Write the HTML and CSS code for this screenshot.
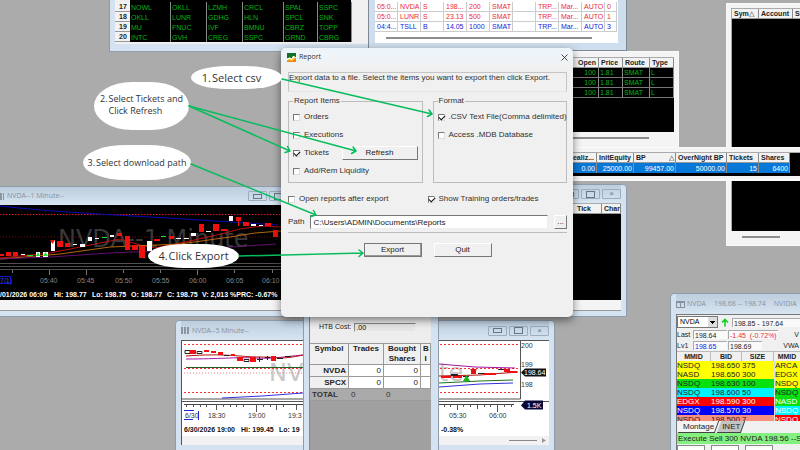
FILE: index.html
```html
<!DOCTYPE html>
<html lang="en">
<head>
<meta charset="utf-8">
<title>Report export</title>
<link rel="stylesheet" href="styles.css">
</head>
<body>
<main class="desktop">

  <section class="window win-symbols">
    <table class="grid symbols">
      <colgroup><col class="c-num"><col class="c-41"><col class="c-36"><col class="c-36"><col class="c-41"><col class="c-34"><col class="c-34"></colgroup>
      <tbody>
        <tr><th>17</th><td>NOWL</td><td>OKLL</td><td>LZMH</td><td>CRCL</td><td>SPAL</td><td>SSPC</td></tr>
        <tr><th>18</th><td>OKLL</td><td>LUNR</td><td>GDHG</td><td>HLN</td><td>SPCL</td><td>SNK</td></tr>
        <tr><th>19</th><td>MU</td><td>FNUC</td><td>IVF</td><td>BMNU</td><td>CBRZ</td><td>TOPP</td></tr>
        <tr><th>20</th><td>INTC</td><td>GVH</td><td>CREG</td><td>SSPC</td><td>GRND</td><td>CBRG</td></tr>
      </tbody>
    </table>
  </section>

  <section class="window win-trades">
    <table class="grid trades">
      <colgroup><col class="c-23"><col class="c-23"><col class="c-23"><col class="c-23"><col class="c-23"><col class="c-23"><col class="c-23"><col class="c-23"><col class="c-23"><col class="c-23"><col class="c-12"></colgroup>
      <tbody>
        <tr class="sell"><td>05:0...</td><td>NVDA</td><td>S</td><td>198...</td><td>200</td><td>SMAT</td><td></td><td>TRP...</td><td>Mar...</td><td>AUTO</td><td>0</td></tr>
        <tr class="sell"><td>05:0...</td><td>LUNR</td><td>S</td><td>23.13</td><td>500</td><td>SMAT</td><td></td><td>TRP...</td><td>Mar...</td><td>AUTO</td><td>1</td></tr>
        <tr class="buy"><td>04:4...</td><td>TSLL</td><td>B</td><td>14.05</td><td>1000</td><td>SMAT</td><td></td><td>TRP...</td><td>Mar...</td><td>AUTO</td><td>3</td></tr>
      </tbody>
    </table>
    <div class="scroll-line"></div>
  </section>

  <section class="window plain win-orders">
    <div class="black-pane">
      <table class="grid orders">
        <colgroup><col><col class="c-24"><col class="c-27"><col class="c-24"></colgroup>
        <thead><tr><th class="num">Open</th><th>Price</th><th>Route</th><th>Type</th></tr></thead>
        <tbody>
          <tr><td class="num">100</td><td>1.81</td><td>SMAT</td><td>L</td></tr>
          <tr><td class="num">100</td><td>1.81</td><td>SMAT</td><td>L</td></tr>
          <tr><td class="num">100</td><td>1.81</td><td>SMAT</td><td>L</td></tr>
        </tbody>
      </table>
    </div>
    <div class="scroll-line"></div>
  </section>

  <section class="window plain win-positions">
    <div class="black-pane">
      <table class="grid">
        <colgroup><col class="c-27"><col class="c-34"><col></colgroup>
        <thead><tr><th>Sym<i>△</i></th><th>Account</th><th>St</th></tr></thead>
      </table>
    </div>
    <div class="scroll-line"></div>
  </section>

  <section class="window plain win-account">
    <div class="black-pane">
      <table class="grid account">
        <colgroup><col><col class="c-37"><col class="c-42"><col class="c-51"><col class="c-32"><col class="c-31"></colgroup>
        <thead><tr><th class="num">Realiz...</th><th>InitEquity</th><th><span class="sorted">BP <i>△</i></span></th><th>OverNight BP</th><th>Tickets</th><th>Shares</th></tr></thead>
        <tbody><tr><td>0.00</td><td>25000.00</td><td>99457.00</td><td>50000.00</td><td>15</td><td>6400</td></tr></tbody>
      </table>
    </div>
  </section>

  <section class="window win-tick">
    <div class="titlebar"><span class="controls"><span class="ctl min"></span><span class="ctl max"></span><span class="ctl close">×</span></span></div>
    <div class="black-pane">
      <table class="grid">
        <colgroup><col><col class="c-19"></colgroup>
        <thead><tr><th><span class="tick-head">Tick</span></th><th>Char</th></tr></thead>
      </table>
    </div>
    <div class="footer-strip"></div>
  </section>

  <section class="window win-chart1">
    <div class="titlebar"><span class="bars-icon"></span><span class="wtitle">NVDA--1 Minute--</span><span class="controls"><span class="ctl min"></span><span class="ctl max"></span></span></div>
    <svg class="chart1" viewBox="0 205 281 95" role="img" aria-label="NVDA one minute chart">
      <rect x="0" y="205" width="281" height="95" fill="#000"/>
      <text x="58" y="247" class="mark dark">NVDA--1 Minute</text>
      <path d="M0 214.500H281" stroke="#e01828" stroke-dasharray="1.500 1.500" fill="none"/>
      <path d="M0 237H281" stroke="#8a1018" stroke-dasharray="1 2" fill="none" stroke-width=".8"/>
      <path d="M0 206C60 213 140 216 200 220S250 223 278 225" stroke="#0808b8" fill="none"/>
      <path d="M0 258L50 253 100 243 120 239 140 245 155 248 190 241 225 233 240 229 262 226 281 227" stroke="#d01010" fill="none" stroke-width=".9"/>
      <path d="M0 259L60 254 110 247 180 244 230 237 255 233 281 231" stroke="#c87010" fill="none" stroke-width=".9"/>
      <path d="M0 259L50 257 110 253 180 250 230 247 276 244" stroke="#70107c" fill="none" stroke-width=".9"/>
      <g fill="#f01010"><path d="M0 254h4v2H0zM6 252h5v4H6zM13 252h5v4h-5zM57 241h6v6h-6zM65 243h5v4h-5zM117 233h5v3h-5zM125 236h5v14h-5zM132 245h6v5h-6zM139 246h6v12h-6zM154 239h6v2h-6zM169 236h5v3h-5zM199 224h5v8h-5zM213 224h6v7h-6zM221 229h6v2h-6zM236 217h5v4h-5zM238 221h1v5h-1zM243 222h6v4h-6zM265 223h6v3h-6zM273 230h5v7h-5z"/></g>
      <g fill="#fff"><path d="M21 254h4v1h-4zM36 252h4v5h-4zM43 252h5v5h-5zM51 240h4v11h-4zM73 244h4v1h-4zM80 244h5v3h-5zM88 237h4v4h-4zM95 238h4v1h-4zM110 235h4v2h-4zM147 241h5v10h-5zM176 238h5v1h-5zM184 238h5v1h-5zM191 233h5v3h-5zM206 231h5v1h-5zM229 216h4v5h-4zM251 224h5v2h-5zM259 225h4v1h-4z"/></g>
      <g fill="#20e030"><path d="M36 256l2-4 2 4zM43 256l2.500-4 2.500 4zM27 255h6v1h-6zM102 237h5v1h-5zM161 236h5v1h-5z"/></g>
      <path d="M50 240h5l-2.500 4z" fill="#f01010"/>
      <path d="M0 263.500H281M0 266.500H281M0 269.500H281" stroke="#505050" fill="none"/>
      <path d="M12.500 270v3M49.500 270v5M86.500 270v5M123.500 270v3M160.500 270v3M197.500 270v5M234.500 270v3M272.500 270v3" stroke="#777" fill="none"/>
      <text x="0" y="283" class="axis blue">7/1)</text><path d="M0 276.500h10.500v7H0" stroke="#1018c8" fill="none"/>
      <g class="axis dim"><text x="40" y="283">05:40</text><text x="77" y="283">05:45</text><text x="115" y="283">05:50</text><text x="152" y="283">05:55</text><text x="189" y="283">06:00</text><text x="226" y="283">06:05</text><text x="262" y="283">06:10</text></g>
      <text y="297" class="info white"><tspan x="0">/01/2026 06:09</tspan><tspan x="54">Hi: 198.77</tspan><tspan x="92">Lo: 198.75</tspan><tspan x="131">O: 198.77</tspan><tspan x="167">C: 198.75</tspan><tspan x="202">V: 2,013 %PRC: -0.67%</tspan></text>
    </svg>
    <div class="footer-strip"></div>
  </section>

  <section class="window win-chart5">
    <div class="titlebar"><span class="bars-icon"></span><span class="wtitle">NVDA--5 Minute--</span><span class="controls"><span class="ctl min"></span><span class="ctl max"></span><span class="ctl close">×</span></span></div>
    <svg class="chart5" viewBox="181 340 368 105" role="img" aria-label="NVDA five minute chart">
      <rect x="181" y="340" width="368" height="105" fill="#fff"/>
      <path d="M181 340.500H549M181.500 340V445M520.500 340V399H181M181 401.500H549" stroke="#555" fill="none"/>
      <text x="269" y="381" class="mark light">NV</text><text x="439" y="381" class="mark light">te</text>
      <path d="M184 344.500H519M184 368.500H519M184 392.500H519" stroke="#ff3030" stroke-dasharray="2 2" fill="none"/>
      <path d="M184 373H302" stroke="#f08080" stroke-dasharray="1 2" fill="none"/>
      <path d="M186 367.500H305" stroke="#206020" fill="none"/>
      <path d="M186 359C220 359 235 357 255 358S280 357 303 355M439 364L475 367 515 368" stroke="#a018a0" fill="none"/>
      <path d="M186 356C225 353 240 357 260 357S280 360 303 355M439 376L480 375 518 372" stroke="#b01010" fill="none"/>
      <path d="M439 383L480 381 513 380" stroke="#207020" fill="none"/>
      <path d="M222 398L262 396 303 393M439 387L480 384 513 383" stroke="#3030e0" fill="none"/>
      <path d="M185 350.500h5v3h-5zM197 351.500h5v2h-5zM244 359.500h5v2h-5z" stroke="#222" fill="#fff"/>
      <path d="M190 350h6v4h-6zM204 350h5v2h-5zM211 351h5v2h-5zM218 352h5v3h-5zM231 354h4v2h-4zM237 357h6v4h-6zM250 357h6v5h-6zM271 356h5v5h-5zM441 376h10v2h-10zM453 376h9v2h-9zM471 369h5v5h-5zM484 373h12v2h-12zM504 369h6v3h-6zM507 371h10v2h-10z" fill="#f01010"/>
      <path d="M224 355h5v1h-5zM257 359h6v1h-6zM259 357h1v5h-1zM265 357h5v1h-5zM267 356h1v4h-1zM277 358h6v1h-6zM285 356h6v1h-6zM451 374h7v2h-7zM463 376h6v1h-6zM478 373h6v1h-6zM498 369h6v1h-6z" fill="#222"/>
      <path d="M463 381l3.500-6 3.500 6z" fill="#18b818"/><path d="M470 369h7l-3.500 5z" fill="#e01010"/>
      <g class="axis"><text x="521" y="348">200</text><text x="521" y="367">199</text><text x="521" y="387">198</text></g>
      <path d="M521 372.500l4-4h21v8h-21z" fill="#111"/><text x="524" y="375" class="axis white">198.64</text>
      <path d="M521 405.500l4-5h18v9h-18z" fill="#080838"/><text x="527" y="408" class="axis white">1.5K</text>
      <path d="M184 404.500H514" stroke="#444" fill="none"/>
      <path d="M186.500 404v3M193.500 404v3M200.500 404v3M206.500 404v3M216.500 404v6M223.500 404v3M230.500 404v3M236.500 404v3M243.500 404v3M256.500 404v8M263.500 404v3M270.500 404v3M276.500 404v6M283.500 404v3M296.500 404v6M444.500 404v3M450.500 404v3M457.500 404v6M463.500 404v3M470.500 404v3M477.500 404v5M484.500 404v3M490.500 404v3M497.500 404v8M504.500 404v3M511.500 404v3" stroke="#555" fill="none"/>
      <text x="185" y="418" class="axis">6/30</text><path d="M184 410.500h10M184 419.500h9M198.500 411v9" stroke="#2020e0" fill="none"/>
      <g class="axis"><text x="208" y="418">18:30</text><text x="248" y="418">19:00</text><text x="288" y="418">19:3</text><text x="449" y="418">05:30</text><text x="489" y="418">06:00</text></g>
      <text y="432" class="info"><tspan x="184">6/30/2026 19:00</tspan><tspan x="241">Hi: 199.45</tspan><tspan x="279">Lo: 19</tspan><tspan x="441">-0.38%</tspan></text>
      <rect x="182" y="436" width="367" height="9" fill="#f2f2f2"/>
      <path d="M509 440.500h28" stroke="#888" fill="none"/><path d="M542 438l4 2.500-4 2.500z" fill="#999"/>
    </svg>
  </section>

  <section class="window win-htb">
    <div class="htb-body">
      <div class="htb-row"><label for="htb">HTB Cost:</label><input id="htb" type="text" value=".00"></div>
      <table class="shares">
        <colgroup><col class="c-39"><col class="c-35"><col class="c-37"><col></colgroup>
        <thead><tr><th>Symbol</th><th>Trades</th><th>Bought<br>Shares</th><th>B<br>I</th></tr></thead>
        <tbody>
          <tr><th>NVDA</th><td>0</td><td>0</td><td></td></tr>
          <tr><th>SPCX</th><td>0</td><td>0</td><td></td></tr>
          <tr class="total"><th>TOTAL</th><td>0</td><td>0</td><td></td></tr>
        </tbody>
      </table>
    </div>
  </section>

  <section class="window win-montage">
    <div class="titlebar"><span class="grid-icon"></span><span class="wtitle spread"><span>NVDA</span><span>198.68 -- 198.74</span><span>NVIDIA</span></span></div>
    <div class="montage">
      <div class="quote-row"><select aria-label="Symbol"><option>NVDA</option></select><svg class="up" viewBox="0 0 8 8"><path d="M4 8V1M1 4l3-3 3 3" stroke="#10d020" stroke-width="1.600" fill="none"/></svg><span class="field grow">198.85 - 197.64</span></div>
      <div class="quote-row small"><span class="tag">Last</span><span class="field w34">198.64</span><span class="field w50 red">-1.45&nbsp; (-0.72%)</span><span class="end">V</span></div>
      <div class="quote-row small"><span class="tag">Lv1</span><span class="field w34 blue">198.65</span><span class="field w34">198.69</span><span class="end">VWA</span></div>
      <div class="book-clip">
        <table class="book">
          <colgroup><col class="c-34"><col class="c-31"><col class="c-32"><col></colgroup>
          <thead><tr><th>MMID</th><th>BID</th><th>SIZE</th><th>MMID</th></tr></thead>
          <tbody>
            <tr class="yellow"><td>NSDQ</td><td>198.650</td><td>375</td><td>ARCA</td></tr>
            <tr class="yellow"><td>NASD</td><td>198.650</td><td>300</td><td>EDGX</td></tr>
            <tr class="green"><td>NSDQ</td><td>198.630</td><td>100</td><td class="yellow">NSDQ</td></tr>
            <tr class="cyan"><td>NSDQ</td><td>198.600</td><td>50</td><td class="green">NSDQ</td></tr>
            <tr class="crimson"><td>EDGX</td><td>198.590</td><td>300</td><td class="green">NASD</td></tr>
            <tr class="navy"><td>NSDQ</td><td>198.570</td><td>30</td><td class="cyan">NSDQ</td></tr>
            <tr class="salmon"><td>NSDQ</td><td>198.500</td><td>7</td><td class="crimson">NSDQ</td></tr>
          </tbody>
        </table>
      </div>
      <div class="tabs"><span class="tab active">Montage</span><span class="tab">INET</span></div>
      <div class="exec">Execute Sell 300 NVDA 198.56 --S</div>
      <div class="order-row"><i></i><i></i><i></i></div>
    </div>
  </section>

  <form class="dialog" aria-label="Report">
    <header class="dialog-title">
      <svg class="app-icon" viewBox="0 0 10 10"><rect width="10" height="10" rx="1" fill="#f8c820"/><path d="M0 0h10v5L7 3 5 6 3 5 0 6z" fill="#107028"/><path d="M0 6l3-1 2 1 2-3 3 2v1L7 5 5 8 3 6 0 8z" fill="#fff"/><path d="M0 9l3-1 3 1 4-4v5H0z" fill="#f08018"/></svg>
      <span>Report</span>
      <button type="button" class="x-button" aria-label="Close"><svg viewBox="0 0 7 7"><path d="M.5.5l6 6M6.500.5l-6 6" stroke="#333" stroke-width=".9"/></svg></button>
    </header>
    <div class="dialog-body">
      <p class="intro">Export data to a file. Select the items you want to export then click Export.</p>
      <div class="groups">
        <fieldset>
          <legend>Report Items</legend>
          <label class="check"><input type="checkbox">Orders</label>
          <label class="check"><input type="checkbox">Executions</label>
          <div class="with-button"><label class="check"><input type="checkbox" checked>Tickets</label><button type="button" class="btn refresh">Refresh</button></div>
          <label class="check"><input type="checkbox">Add/Rem Liquidity</label>
        </fieldset>
        <fieldset>
          <legend>Format</legend>
          <label class="check"><input type="checkbox" checked>.CSV Text File(Comma delimited)</label>
          <label class="check"><input type="checkbox">Access .MDB Database</label>
        </fieldset>
      </div>
      <div class="options">
        <label class="check"><input type="checkbox">Open reports after export</label>
        <label class="check"><input type="checkbox" checked>Show Training orders/trades</label>
      </div>
      <div class="path-row">
        <label for="path">Path</label>
        <input id="path" type="text" value="C:\Users\ADMIN\Documents\Reports">
        <button type="button" class="btn browse">...</button>
      </div>
      <div class="actions">
        <button type="button" class="btn primary">Export</button>
        <button type="button" class="btn">Quit</button>
      </div>
    </div>
  </form>

  <div class="note note-1"><span>1.</span><span>Select csv</span></div>
  <div class="note note-2"><span>2.</span><span>Select Tickets and<br>Click Refresh</span></div>
  <div class="note note-3"><span>3.</span><span>Select download path</span></div>
  <div class="note note-4"><span>4.</span><span>Click Export</span></div>

  <svg class="arrows" viewBox="0 0 800 450" aria-hidden="true">
    <g fill="none" stroke="#06bd5c" stroke-width="1.500" stroke-linecap="round" stroke-linejoin="round">
      <path d="M282 79L432 114M427.500 116.500L432 114 429 110"/>
      <path d="M189 106L356 151M351.500 153.500L356 151 353 147"/>
      <path d="M189 106L290 151M285 152.500L290 151 287.500 146.500"/>
      <path d="M191 164L316 215M311 216.500L316 215 313.500 210.500"/>
      <path d="M239 256L363 253M359 256.500L363 253 359 250"/>
    </g>
  </svg>
</main>
</body>
</html>
```
FILE: styles.css
```css
* { box-sizing: border-box; }

body {
  margin: 0;
  font: 7px/10px "Liberation Sans", sans-serif;
  color: #222;
}

.desktop {
  position: relative;
  min-height: 100vh;
  overflow: hidden;
  background: #ababab;
}

/* Windows placed freely on the desktop */
.window {
  position: absolute;
  overflow: hidden;
  background: #d4e2f1;
  border: 1px solid #8e9cab;
}
.window.plain { background: #f4f4f4; border-color: #fafafa; }

.win-symbols { left: 109px; top: 0; width: 260px; height: 52px; padding: 2px 7px 7px 5px; border-top: 0; background: linear-gradient(#d4e2f1, #d4e2f1) 0 0 / 5px 100% no-repeat, linear-gradient(#000, #000) 20px 0 / 221px 2px no-repeat, linear-gradient(#d4e2f1, #d4e2f1) 0 100% / 100% 7px no-repeat, #f0f0f0; }
.win-trades { left: 368px; top: 0; width: 259px; height: 51px; padding: 2px 9px 7px 6px; border-top: 0; border-color: #7d8894; background: linear-gradient(#fff, #fff) 6px 0 / 243px 43px no-repeat, #cfdeee; }
.win-orders { left: 500px; top: 51px; width: 179px; height: 97px; padding: 5px 4px 0; }
.win-positions { left: 726px; top: 3px; width: 84px; height: 243px; padding: 4px; }
.win-account { left: 500px; top: 147px; width: 310px; height: 34px; padding: 4px; border-bottom: 2px solid #888; }
.win-tick { left: 500px; top: 184px; width: 127px; height: 133px; padding: 0 5px; border-radius: 0 4px 0 0; }
.win-chart1 { left: -6px; top: 186px; width: 300px; height: 131px; padding: 0 5px; }
.win-chart5 { left: 175px; top: 320px; width: 380px; height: 140px; padding: 0 5px; border-radius: 4px 4px 0 0; }
.win-htb { left: 303px; top: 310px; width: 136px; height: 150px; padding: 0 7px 0 5px; }
.win-montage { left: 670px; top: 293px; width: 132px; height: 170px; padding: 0 0 0 5px; border-radius: 4px 0 0 0; }

.black-pane { background: #000; border: 1px solid #aaa; border-width: 1px 0 0 1px; }
.win-orders .black-pane { height: 75px; }
.win-positions .black-pane { height: 223px; }
.win-account .black-pane { height: 24px; }
.win-tick .black-pane { height: 97px; }

.scroll-line { height: 2px; margin: 5px 25px 0 11px; background: #8d8d8d; }
.footer-strip { height: 11px; background: #f4f4f4; border-bottom: 1px solid #999; }

/* Title bars */
.titlebar {
  display: flex;
  align-items: center;
  gap: 3px;
  height: 18px;
  background: linear-gradient(#bccddd, #d8e5f2);
  color: #87929e;
}
.win-chart5 .titlebar { height: 19px; }
.win-montage .titlebar { height: 20px; gap: 2px; }
.wtitle { font: 7px/10px "Open Sans", sans-serif; }
.spread { display: flex; gap: 8px; white-space: nowrap; }
.controls { display: flex; gap: 2px; margin-left: auto; }
.ctl { display: grid; place-items: center; width: 19px; height: 10px; border: 1px solid #9cadbe; border-radius: 1px; font-size: 8px; color: #687480; line-height: 8px; }
.ctl.min::before, .ctl.max::before { content: ""; width: 7px; height: 3px; border: 1px solid #687480; }
.ctl.max::before { height: 5px; }
.bars-icon { width: 8px; height: 7px; background: linear-gradient(90deg, #8a95a1 2px, transparent 2px 3px, #8a95a1 3px 5px, transparent 5px 6px, #8a95a1 6px); }
.win-chart1 .bars-icon { width: 4px; }
.grid-icon { width: 9px; height: 7px; border: 1px solid #87929e; border-top-width: 2px; background: linear-gradient(90deg, transparent 3px, #87929e 3px 4px, transparent 4px); }

/* Data grids */
table { border-collapse: separate; border-spacing: 0; table-layout: fixed; width: 100%; }
td, th { padding: 0 1px; overflow: hidden; white-space: nowrap; text-align: left; }
.c-12 { width: 12px; } .c-num { width: 15px; } .c-19 { width: 19px; }
.c-23 { width: 23px; } .c-24 { width: 24px; } .c-27 { width: 27px; }
.c-31 { width: 31px; } .c-32 { width: 32px; } .c-34 { width: 34px; }
.c-35 { width: 35px; } .c-36 { width: 36px; } .c-37 { width: 37px; }
.c-39 { width: 39px; } .c-41 { width: 41px; } .c-42 { width: 42px; } .c-51 { width: 51px; }

.grid td, .grid th { height: 10px; line-height: 9px; border-right: 1px solid #8a8a8a; }
.grid th { background: #f2f2f2; color: #222; border-bottom: 1px solid #999; padding-left: 2px; }
.grid i { font-style: normal; font-weight: normal; }
.grid .num { text-align: right; padding-right: 2px; }
.symbols { width: 237px; }
.symbols td, .orders td { background: #000; color: #06b414; }
.symbols th { border-right: 0; text-align: center; }
.trades td { background: #fff; border-color: #ccc; border-bottom: 1px solid #ccc; padding-left: 2px; }
.sell { color: #f02836; }
.buy { color: #2020d8; }
.orders td { border-bottom: 1px solid #777; }
.account { width: 284px; }
.account td { background: #0878d8; color: #fff; text-align: right; }
.sorted { display: flex; justify-content: space-between; }
.tick-head { display: block; padding-left: 68px; }

/* Charts */
.chart1, .chart5 { display: block; }
.chart1 { width: 281px; height: 95px; }
.chart5 { width: 368px; height: 105px; }
.mark { font: 24px "DejaVu Sans", sans-serif; }
.mark.dark { fill: #393939; }
.mark.light { fill: #c8c8c8; }
.axis { font-size: 7px; fill: #333; }
.axis.dim { fill: #858585; }
.axis.blue { fill: #4048e0; }
.info { font-size: 7px; font-weight: bold; fill: #111; }
.axis.white, .info.white { fill: #fff; }

/* Share totals */
.htb-body { height: 140px; background: #a0a0a0; border-left: 1px solid #888; }
.htb-row { display: flex; align-items: center; gap: 3px; height: 32px; padding: 0 15px 0 9px; background: #ededed; }
.htb-row input { flex: 1; min-width: 0; height: 9px; padding: 0 1px; border: 1px solid #aaa; border-color: #888 #ededed #ededed #888; background: #e6e6e6; font: 7px/8px "Liberation Sans", sans-serif; }
.shares { font-size: 8px; line-height: 10px; }
.shares th, .shares td { height: 12px; padding: 0 2px; border: 1px solid #999; border-width: 0 1px 1px 0; text-align: right; background: #fff; }
.shares th { background: #f0f0f0; }
.shares thead th { height: 21px; text-align: center; vertical-align: top; border-top-width: 1px; }
.shares .total th, .shares .total td { background: #aaa; border-right-color: #aaa; color: #333; text-align: left; }

/* Montage */
.montage { background: #f0f0f0; border: 1px solid #777; border-right: 0; }
.quote-row { display: flex; align-items: center; gap: 3px; height: 14px; white-space: nowrap; }
.quote-row.small { height: 11px; gap: 1px; }
.quote-row select { width: 41px; height: 12px; padding: 0 2px; border: 1px solid #777; border-radius: 0; font: 7px/10px "Liberation Sans", sans-serif; appearance: none; background: linear-gradient(#000, #000) 32px 4px / 5px 1px no-repeat, linear-gradient(#000, #000) 33px 5px / 3px 1px no-repeat, linear-gradient(#000, #000) 34px 6px / 1px 1px no-repeat, linear-gradient(#ddd, #ddd) 30px 0 / 10px 100% no-repeat, #fff; }
.up { width: 8px; height: 9px; }
.field { height: 9px; padding: 0 1px; line-height: 9px; background: #fafafa; border-top: 1px solid #aaa; border-left: 1px solid #aaa; }
.grow { flex: 1; }
.w34 { width: 34px; } .w50 { width: 50px; }
.tag { width: 15px; }
.red { color: #e82838; } .blue { color: #2020e0; }
.end { margin-left: auto; padding-right: 2px; }
.book-clip { height: 70px; overflow: hidden; }
.book { font-size: 8px; }
.book td { height: 9px; line-height: 9px; padding: 0; }
.book th { height: 10px; line-height: 9px; font-size: 7px; text-align: center; padding: 0; border: 1px solid #bbb; border-width: 1px 1px 0 0; }
.book td:last-child { border-left: 1px solid #ddd; }
.yellow { background: #ff0; } .green { background: #08e010; } .cyan { background: #00f4ff; }
.crimson { background: #f00; color: #fff; } .navy { background: #00f; color: #fff; } .salmon { background: #f89080; }
.tabs { display: flex; gap: 2px; height: 12px; padding-left: 3px; font-size: 8px; line-height: 11px; }
.tab { position: relative; z-index: 0; padding: 0 3px; }
.tab::before { content: ""; position: absolute; inset: 0; z-index: -1; border: solid #444; border-width: 0 1px 1px 0; background: #c4c4c4; transform: skewX(-20deg); }
.tab.active::before { background: #f4f4f4; }
.exec { height: 11px; padding-left: 1px; background: #84f080; font-size: 8px; line-height: 11px; white-space: nowrap; overflow: hidden; }
.order-row { display: flex; gap: 6px; padding-top: 1px; height: 20px; }
.order-row i { width: 28px; border: 1px solid #888; background: #fff; }

/* Report dialog */
.dialog {
  position: absolute;
  left: 281px;
  top: 48px;
  width: 292px;
  min-height: 269px;
  background: #f0f0f0;
  border-radius: 5px;
  box-shadow: 0 3px 9px rgba(0, 0, 0, .5);
  overflow: hidden;
  font-size: 8px;
  color: #303030;
}
.dialog-title { display: flex; align-items: center; gap: 3px; height: 18px; padding: 0 5px 0 6px; background: linear-gradient(#edf5fa, #f0f2f4); font: 7px/10px "Open Sans", sans-serif; }
.app-icon { width: 9px; height: 9px; }
.x-button { margin-left: auto; width: 7px; height: 7px; padding: 0; border: 0; background: none; }
.x-button svg { display: block; width: 7px; height: 7px; }
.dialog-body { padding: 6px 6px 0 7px; }
.intro { height: 20px; margin: 0; border: 1px solid #c4c4c4; border-bottom-color: #e6e6e6; line-height: 10px; white-space: nowrap; }
.groups { display: grid; grid-template-columns: 1fr 1fr; gap: 10px; margin-top: 4px; }
fieldset { min-width: 0; height: 87px; margin: 0; padding: 2px 4px; border: 1px solid #bcbcbc; }
legend { padding: 0 1px; line-height: 10px; }
.check { display: flex; align-items: center; gap: 4px; height: 18px; white-space: nowrap; }
.check input {
  appearance: none;
  flex: none;
  display: grid;
  place-items: center;
  width: 7px;
  height: 7px;
  margin: 0;
  border: 1px solid #777;
  border-color: #777 #ddd #ddd #777;
  background: #fff;
}
.check input:checked::before { content: ""; width: 5px; height: 3px; border: solid #111; border-width: 0 0 1px 1px; transform: rotate(-45deg); }
.with-button { display: flex; align-items: center; justify-content: space-between; }
.btn { height: 14px; width: 58px; padding: 0; border: 1px solid #fff; border-right-color: #777; border-bottom-color: #777; border-radius: 0; background: #f0f0f0; color: #222; font: 8px/10px "Liberation Sans", sans-serif; }
.btn.refresh { width: 76px; }
.btn.primary { border: 1px solid #777; box-shadow: inset -1px -1px #999; }
.btn.browse { width: 13px; height: 14px; }
.options { display: grid; grid-template-columns: 1fr 1fr; margin-top: 7px; }
.path-row { display: flex; align-items: center; gap: 6px; padding: 7px 0 3px; border-bottom: 1px solid #bcbcbc; }
.path-row input { flex: 1; min-width: 0; height: 14px; padding: 0 2px; border: 1px solid #777; border-color: #777 #eee #eee #777; background: #fff; color: #222; font: 8px/10px "Liberation Sans", sans-serif; }
.actions { display: flex; justify-content: center; gap: 12px; margin-top: 10px; }

/* Step notes and arrows over the windows */
.note {
  position: absolute;
  display: flex;
  align-items: center;
  justify-content: center;
  gap: 1px;
  background: #fff;
  border-radius: 40% / 50%;
  color: #333;
  font: 9px/12px "Open Sans", sans-serif;
  white-space: nowrap;
}
.note-1 { left: 191px; top: 66px; width: 91px; height: 23px; padding-right: 10px; font-size: 11px; }
.note-2 { left: 94px; top: 82px; width: 95px; height: 48px; padding-bottom: 2px; align-items: center; }
.note-2 span:first-child { align-self: center; padding-bottom: 12px; }
.note-3 { left: 83px; top: 145px; width: 108px; height: 35px; }
.note-4 { left: 148px; top: 244px; width: 91px; height: 24px; font-size: 11px; }
.arrows { position: absolute; left: 0; top: 0; width: 800px; height: 450px; pointer-events: none; }
```
